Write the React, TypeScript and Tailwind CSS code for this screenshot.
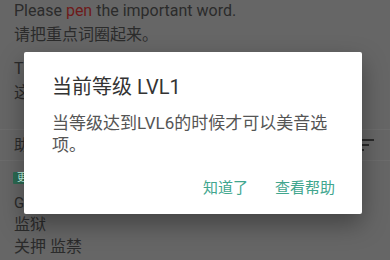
import React from "react"

const font = { fontFamily: "Roboto, 'Noto Sans CJK SC', sans-serif" }

function SortIcon() {
  return (
    <svg width="16" height="12" viewBox="0 0 16 12" className="text-[#2a2a2a]">
      <rect x="0" y="0" width="16" height="2" fill="currentColor" />
      <rect x="0" y="5" width="11" height="2" fill="currentColor" />
      <rect x="0" y="10" width="6" height="2" fill="currentColor" />
    </svg>
  )
}

export default function App() {
  return (
    <div
      className="relative w-[390px] h-[260px] overflow-hidden bg-[#666666] text-[#2b2b2b]"
      style={font}
    >
      {/* page behind the dim layer */}
      <div className="flex flex-col text-[16px] leading-[22px]">
        <div className="px-[14px]">
          <p>
            Please <span className="text-[#6e1a1a]">pen</span> the important word.
          </p>
          <p className="mt-[2px]">请把重点词圈起来。</p>
        </div>

        <div className="px-[14px] mt-[12px]">
          <p>The farmer keeps his pigs in a pen.</p>
          <p className="mt-[2px]">这个农民把猪关在圈里。</p>
        </div>

        <div className="mt-[25px] h-[32px] flex items-center justify-between pl-[14px] pr-[16px] border-y border-[#6c6c6c]">
          <span className="text-[15px]">助记</span>
          <SortIcon />
        </div>

        <div className="px-[13px] mt-[11px] flex">
          <span className="bg-[#2c6a52] text-[#cfe] text-[10px] leading-[12px] px-[4px] rounded-[1px]">
            更多
          </span>
        </div>

        <div className="px-[14px] mt-[8px] text-[15px] leading-[22px]">
          <p>Gaol</p>
          <p className="text-[16px]">监狱</p>
          <p className="text-[16px]">关押 监禁</p>
        </div>
      </div>

      {/* dialog */}
      <div className="absolute left-[24px] top-[52px] w-[338px] h-[162px] bg-white rounded-[2px] shadow-[0_10px_24px_rgba(0,0,0,0.35)] flex flex-col">
        <div className="pl-[28px] pr-[26px] pt-[23px]">
          <h2 className="text-[20px] leading-[24px] text-[#333333] font-normal">当前等级 LVL1</h2>
          <p className="mt-[13px] text-[17px] leading-[22px] text-[#555555]">
            当等级达到LVL6的时候才可以美音选项。
          </p>
        </div>
        <div className="mt-auto flex justify-end gap-[27px] pr-[27px] pb-[16px] text-[15px] leading-[20px] text-[#41a68e]">
          <button>知道了</button>
          <button>查看帮助</button>
        </div>
      </div>
    </div>
  )
}
